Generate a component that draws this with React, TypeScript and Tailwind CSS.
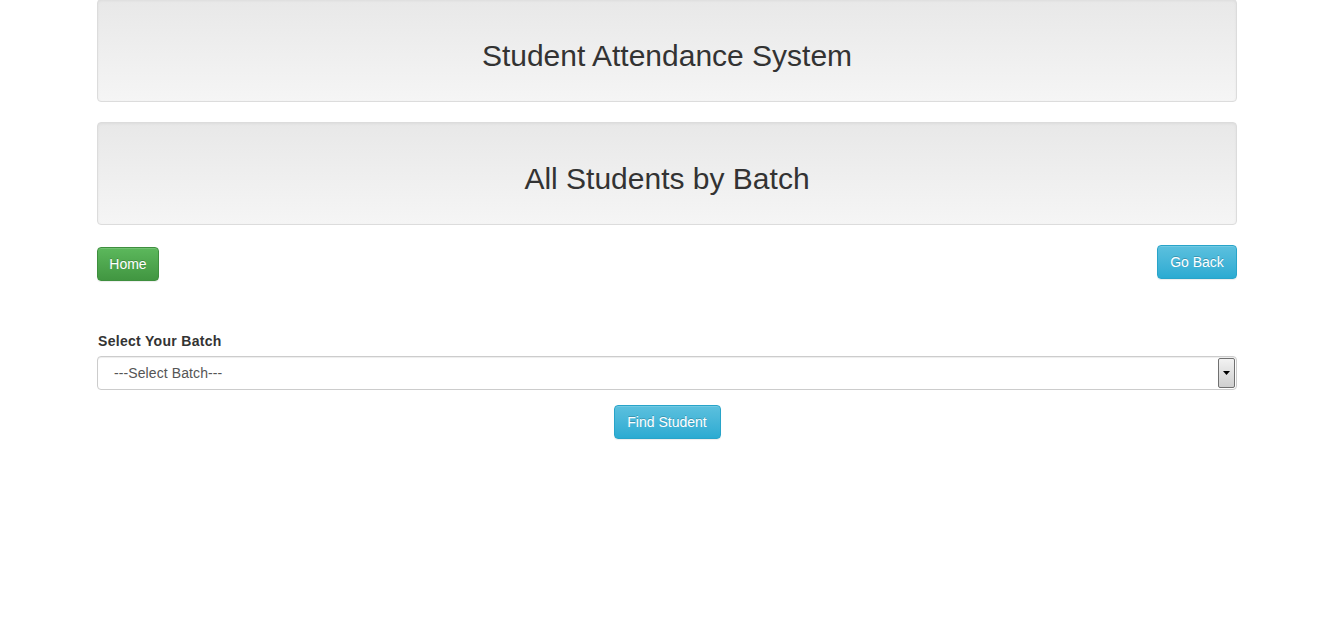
const Banner = ({ title }: { title: string }) => (
  <div className="h-[103px] flex items-center justify-center rounded border border-[#dcdcdc] bg-gradient-to-b from-[#e8e8e8] to-[#f5f5f5] shadow-[inset_0_1px_3px_rgba(0,0,0,0.05),0_1px_0_rgba(255,255,255,0.1)]">
    <h2 className="text-[30px] text-[#333] leading-[1.1] pt-[10px]">{title}</h2>
  </div>
);

export default function App() {
  return (
    <div className="min-h-[618px] bg-white font-['Liberation_Sans',Arial,sans-serif] text-[14px] text-[#333]">
      <div className="ml-[97px] w-[1140px] -mt-[1px]">
        <Banner title="Student Attendance System" />
        <div className="mt-[20px]">
          <Banner title="All Students by Batch" />
        </div>

        <div className="flex justify-between items-start mt-[20px]">
          <button
            type="button"
            className="mt-[2px] h-[34px] w-[62px] rounded border border-[#3e8f3e] bg-gradient-to-b from-[#5cb85c] to-[#419641] text-white text-[14px] shadow-[inset_0_1px_0_rgba(255,255,255,0.15),0_1px_1px_rgba(0,0,0,0.075)] [text-shadow:0_-1px_0_rgba(0,0,0,0.2)]"
          >
            Home
          </button>
          <button
            type="button"
            className="h-[34px] w-[80px] rounded border border-[#28a4c9] bg-gradient-to-b from-[#5bc0de] to-[#2aabd2] text-white text-[14px] shadow-[inset_0_1px_0_rgba(255,255,255,0.15),0_1px_1px_rgba(0,0,0,0.075)] [text-shadow:0_-1px_0_rgba(0,0,0,0.2)]"
          >
            Go Back
          </button>
        </div>

        <div className="mt-[50px]">
          <label className="block pl-[1px] font-bold text-[14px] tracking-[0.3px] leading-[20px] mb-[5px] text-[#333]">
            Select Your Batch
          </label>
          <div className="relative h-[34px] rounded border border-[#ccc] bg-white shadow-[inset_0_1px_1px_rgba(0,0,0,0.075)] flex items-center">
            <span className="pl-[16px] text-[14px] tracking-[0.1px] text-[#555]">---Select Batch---</span>
            <div className="absolute right-[1px] top-[1px] bottom-[1px] w-[17px] border border-[#707070] rounded-[2px] bg-gradient-to-b from-[#f2f2f2] to-[#cfcfcf] flex items-center justify-center">
              <svg width="7" height="4" viewBox="0 0 7 4">
                <path d="M0 0h7L3.5 4z" fill="#000" />
              </svg>
            </div>
          </div>
        </div>

        <div className="flex justify-center mt-[15px]">
          <button
            type="button"
            className="h-[34px] w-[107px] rounded border border-[#28a4c9] bg-gradient-to-b from-[#5bc0de] to-[#2aabd2] text-white text-[14px] shadow-[inset_0_1px_0_rgba(255,255,255,0.15),0_1px_1px_rgba(0,0,0,0.075)] [text-shadow:0_-1px_0_rgba(0,0,0,0.2)]"
          >
            Find Student
          </button>
        </div>
      </div>
    </div>
  );
}
